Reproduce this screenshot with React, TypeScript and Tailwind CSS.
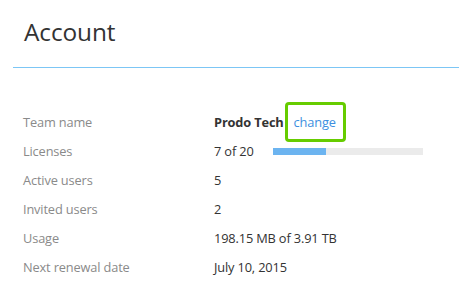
import React from "react";

export default function App() {
  return (
    <div
      className="w-[459px] h-[300px] bg-white overflow-hidden"
      style={{ fontFamily: '"Open Sans", sans-serif' }}
    >
      <div className="pl-[24px] pt-[15px] h-[67px]">
        <h1 className="text-[24.4px] leading-[33px] text-[#333333] font-normal tracking-[-0.1px]">Account</h1>
      </div>
      <div className="ml-[13px] h-px bg-[#7cc6f5]" />
      <div className="mt-[40px] pl-[23px] text-[12.8px] tracking-[-0.15px]">
        <div className="flex items-center h-[29px]">
          <div className="w-[191px] text-[#8a8a8a]">Team name</div>
          <div className="flex items-center text-[#333333]">
            <span className="font-bold">Prodo Tech</span>
            <span className="relative ml-[10px] text-[#3d8fe0]">
              change
              <span className="absolute -left-[9px] -right-[10px] -top-[11px] -bottom-[10px] border-[3px] border-[#66cc00] rounded-[4px]" />
            </span>
          </div>
        </div>
        <div className="flex items-center h-[29px]">
          <div className="w-[191px] text-[#8a8a8a]">Licenses</div>
          <div className="flex items-center text-[#333333]">
            <span className="w-[59px]">7 of 20</span>
            <div className="w-[150px] h-[7px] bg-[#ebebeb]">
              <div className="h-full bg-[#6cb4f0]" style={{ width: "35%" }} />
            </div>
          </div>
        </div>
        <div className="flex items-center h-[29px]">
          <div className="w-[191px] text-[#8a8a8a]">Active users</div>
          <div className="text-[#333333]">5</div>
        </div>
        <div className="flex items-center h-[29px]">
          <div className="w-[191px] text-[#8a8a8a]">Invited users</div>
          <div className="text-[#333333]">2</div>
        </div>
        <div className="flex items-center h-[29px]">
          <div className="w-[191px] text-[#8a8a8a]">Usage</div>
          <div className="text-[#333333]">198.15 MB of 3.91 TB</div>
        </div>
        <div className="flex items-center h-[29px]">
          <div className="w-[191px] text-[#8a8a8a]">Next renewal date</div>
          <div className="text-[#333333]">July 10, 2015</div>
        </div>
      </div>
    </div>
  );
}
